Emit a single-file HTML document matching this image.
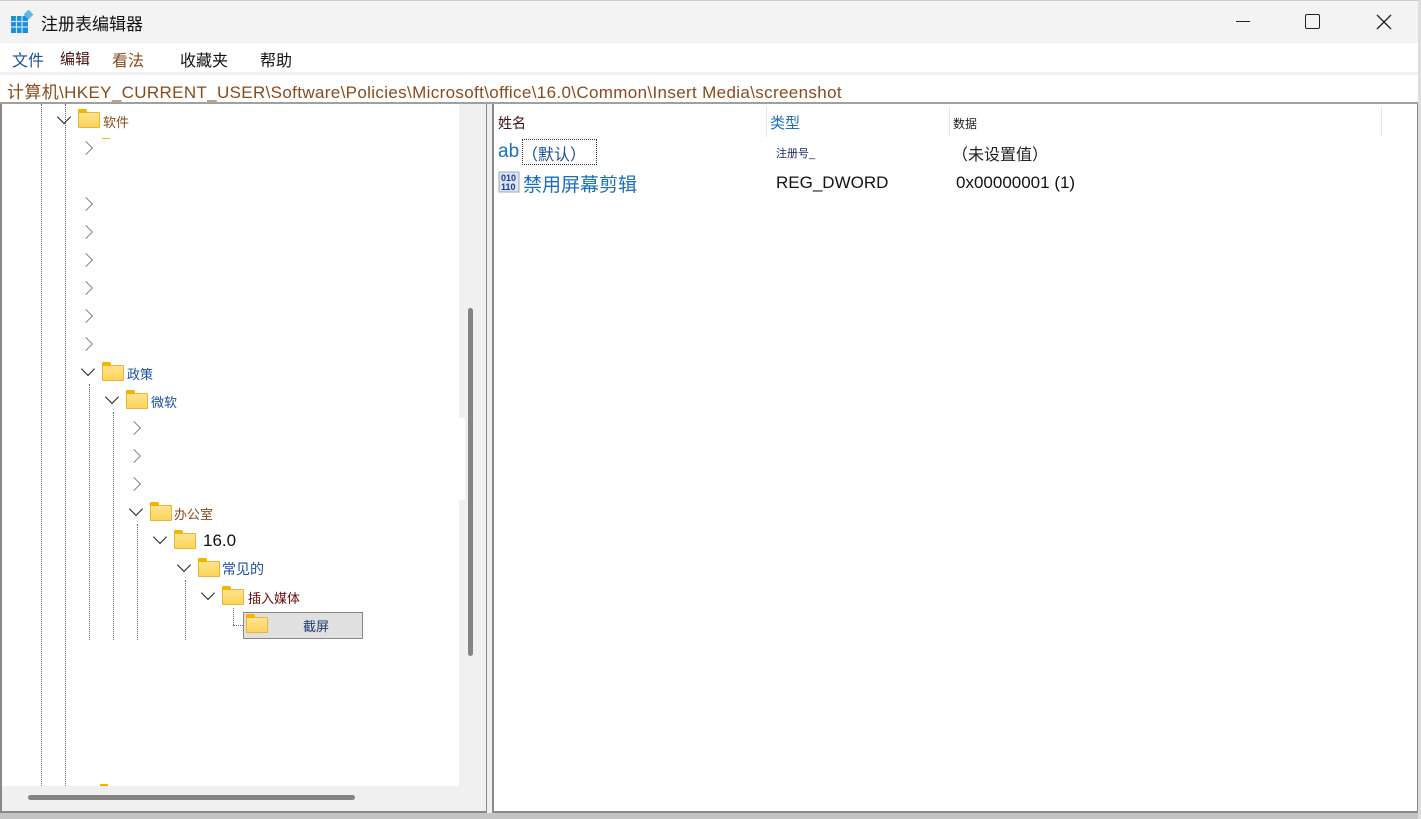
<!DOCTYPE html>
<html><head><meta charset="utf-8"><style>
*{margin:0;padding:0;box-sizing:border-box}
body{width:1421px;height:819px;overflow:hidden;background:#fff;font-family:"Liberation Sans","Noto Sans CJK SC",sans-serif;position:relative}
.a{position:absolute;white-space:nowrap}
.chev{position:absolute;width:10px;height:10px;border-right:1.6px solid #222;border-bottom:1.6px solid #222;transform:rotate(45deg)}
.chr{position:absolute;width:10px;height:10px;border-right:1.6px solid #888;border-bottom:1.6px solid #888;transform:rotate(-45deg)}
.fold{position:absolute;width:22px;height:16px;background:linear-gradient(#ffe48a,#fcd35c);border:1px solid #e8b43a;border-radius:1px}
.fold:before{content:"";position:absolute;left:-1px;top:-4px;width:9px;height:4px;background:#f5b400;border-radius:1px 2px 0 0}
.vd{position:absolute;width:0;border-left:1px dotted #666}
.t{font-size:13px;position:absolute;white-space:nowrap}
</style></head><body>
<div class="a" style="left:0;top:0;width:1421px;height:43px;background:#f3f3f3;border-top:1px solid #ccc"></div>
<svg class="a" style="left:10px;top:10px" width="24" height="24"><rect x="1" y="6" width="17" height="17" fill="#1b8ed8"/><g stroke="#bfe3f8" stroke-width="1.2"><line x1="1" y1="11.5" x2="18" y2="11.5"/><line x1="1" y1="17" x2="18" y2="17"/><line x1="6.5" y1="6" x2="6.5" y2="23"/><line x1="12" y1="6" x2="12" y2="23"/></g><rect x="15" y="1" width="7" height="7" fill="#5ab8ec" transform="rotate(45 18.5 4.5)"/></svg>
<div class="a" style="left:41px;top:10px;font-size:17px;color:#111">注册表编辑器</div>
<div class="a" style="left:1236px;top:21px;width:14px;height:1px;background:#222"></div>
<div class="a" style="left:1305px;top:14px;width:15px;height:15px;border:1.3px solid #222;border-radius:2px"></div>
<svg class="a" style="left:1375px;top:13px" width="18" height="18"><path d="M2 2L16 16M16 2L2 16" stroke="#222" stroke-width="1.3"/></svg>
<div class="a" style="left:12px;top:47px;font-size:16px;color:#1a4fa0">文件</div>
<div class="a" style="left:60px;top:48px;font-size:15px;color:#4a1010">编辑</div>
<div class="a" style="left:112px;top:47px;font-size:16px;color:#8a4a1a">看法</div>
<div class="a" style="left:180px;top:47px;font-size:16px;color:#111">收藏夹</div>
<div class="a" style="left:260px;top:47px;font-size:16px;color:#111">帮助</div>
<div class="a" style="left:0;top:72px;width:1421px;height:3px;background:#f0f0f0"></div>
<div class="a" style="left:0;top:75px;width:1418px;height:29px;border-bottom:2px solid #a0a0a0"></div>
<div class="a" style="left:7px;top:78px;font-size:17px;letter-spacing:0.35px;color:#8a4a1a">计算机\HKEY_CURRENT_USER\Software\Policies\Microsoft\office\16.0\Common\Insert Media\screenshot</div>
<div class="a" style="left:0;top:104px;width:487px;height:709px;border-left:2px solid #888;border-bottom:2px solid #888;border-right:1px solid #888;background:#f0f0f0"></div>
<div class="a" style="left:2px;top:104px;width:457px;height:682px;background:#fff"></div>
<div class="a" style="left:459px;top:104px;width:6px;height:314px;background:#f0f0f0"></div>
<div class="a" style="left:459px;top:418px;width:6px;height:82px;background:#fff"></div>
<div class="a" style="left:468px;top:308px;width:5px;height:348px;background:#848484;border-radius:3px"></div>
<div class="a" style="left:28px;top:795px;width:327px;height:5px;background:#848484;border-radius:3px"></div>
<div class="a" style="left:487px;top:104px;width:6px;height:709px;background:#f0f0f0;border-right:1px solid #888"></div>
<div class="vd" style="left:41px;top:104px;height:682px"></div>
<div class="vd" style="left:65px;top:104px;height:682px"></div>
<div class="vd" style="left:89px;top:384px;height:256px"></div>
<div class="vd" style="left:113px;top:412px;height:228px"></div>
<div class="vd" style="left:137px;top:524px;height:116px"></div>
<div class="vd" style="left:185px;top:580px;height:60px"></div>
<div class="vd" style="left:233px;top:608px;height:17px"></div>
<div class="a" style="left:233px;top:625px;width:12px;border-top:1px dotted #666"></div>
<div class="chev" style="left:59px;top:112px"></div><div class="fold" style="left:78px;top:112px"></div><div class="t" style="left:103px;top:112px;color:#8a4a1a">软件</div>
<div class="a" style="left:102px;top:138px;width:8px;height:1px;background:#f5b400"></div>
<div class="chr" style="left:81px;top:143px"></div>
<div class="chr" style="left:81px;top:199px"></div>
<div class="chr" style="left:81px;top:227px"></div>
<div class="chr" style="left:81px;top:255px"></div>
<div class="chr" style="left:81px;top:283px"></div>
<div class="chr" style="left:81px;top:311px"></div>
<div class="chr" style="left:81px;top:339px"></div>
<div class="chev" style="left:83px;top:364px"></div><div class="fold" style="left:102px;top:365px"></div><div class="t" style="left:127px;top:364px;color:#1a4fa0">政策</div>
<div class="chev" style="left:107px;top:392px"></div><div class="fold" style="left:126px;top:393px"></div><div class="t" style="left:151px;top:392px;color:#1a4fa0">微软</div>
<div class="chr" style="left:129px;top:423px"></div>
<div class="chr" style="left:129px;top:451px"></div>
<div class="chr" style="left:129px;top:479px"></div>
<div class="chev" style="left:131px;top:504px"></div><div class="fold" style="left:150px;top:505px"></div><div class="t" style="left:174px;top:504px;color:#8a4a1a">办公室</div>
<div class="chev" style="left:155px;top:532px"></div><div class="fold" style="left:174px;top:533px"></div><div class="t" style="left:203px;top:531px;font-size:17px;color:#111">16.0</div>
<div class="chev" style="left:179px;top:560px"></div><div class="fold" style="left:198px;top:561px"></div><div class="t" style="left:222px;top:559px;font-size:14px;color:#1a4fa0">常见的</div>
<div class="chev" style="left:203px;top:588px"></div><div class="fold" style="left:222px;top:589px"></div><div class="t" style="left:248px;top:588px;color:#6a0a0a">插入媒体</div>
<div class="a" style="left:243px;top:612px;width:120px;height:27px;background:#e0e0e0;border:1px solid #888"></div>
<div class="fold" style="left:246px;top:617px"></div><div class="t" style="left:303px;top:616px;color:#1a3a70">截屏</div>
<div class="a" style="left:100px;top:784px;width:8px;height:2px;background:#f5b400"></div>
<div class="a" style="left:493px;top:104px;width:925px;height:709px;border-left:1px solid #888;border-bottom:2px solid #888;border-right:1px solid #888;background:#fff"></div>
<div class="a" style="left:766px;top:107px;width:1px;height:30px;background:#e5e5e5"></div>
<div class="a" style="left:949px;top:107px;width:1px;height:30px;background:#e5e5e5"></div>
<div class="a" style="left:1381px;top:107px;width:1px;height:30px;background:#e5e5e5"></div>
<div class="a" style="left:498px;top:113px;font-size:14px;color:#3a1010">姓名</div>
<div class="a" style="left:770px;top:112px;font-size:15px;color:#1a6fbf">类型</div>
<div class="a" style="left:953px;top:115px;font-size:12px;color:#222">数据</div>
<div class="a" style="left:498px;top:141px;font-size:19px;color:#1a6fbf">ab</div>
<div class="a" style="left:522px;top:139px;width:75px;height:26px;border:1px dotted #333"></div>
<div class="a" style="left:522px;top:141px;font-size:16px;color:#1a4fa0">（默认）</div>
<div class="a" style="left:776px;top:145px;font-size:11px;color:#1a2a60">注册号_</div>
<div class="a" style="left:952px;top:141px;font-size:16px;color:#222">（未设置值）</div>
<svg class="a" style="left:498px;top:171px" width="24" height="22"><rect x="1" y="1" width="20" height="20" fill="#dbe6f2" stroke="#9ab"/><text x="3" y="10" font-size="9" font-weight="bold" fill="#1a3a9a" font-family="Liberation Sans">010</text><text x="3" y="19" font-size="9" font-weight="bold" fill="#1a3a9a" font-family="Liberation Sans">110</text></svg>
<div class="a" style="left:523px;top:170px;font-size:19px;color:#1a6fbf">禁用屏幕剪辑</div>
<div class="a" style="left:776px;top:173px;font-size:17px;color:#111">REG_DWORD</div>
<div class="a" style="left:956px;top:173px;font-size:17px;color:#111">0x00000001 (1)</div>
<div class="a" style="left:0;top:813px;width:1421px;height:6px;background:#c4c4c4"></div>
<div class="a" style="left:1418px;top:0;width:3px;height:819px;background:#ddd"></div>
</body></html>
